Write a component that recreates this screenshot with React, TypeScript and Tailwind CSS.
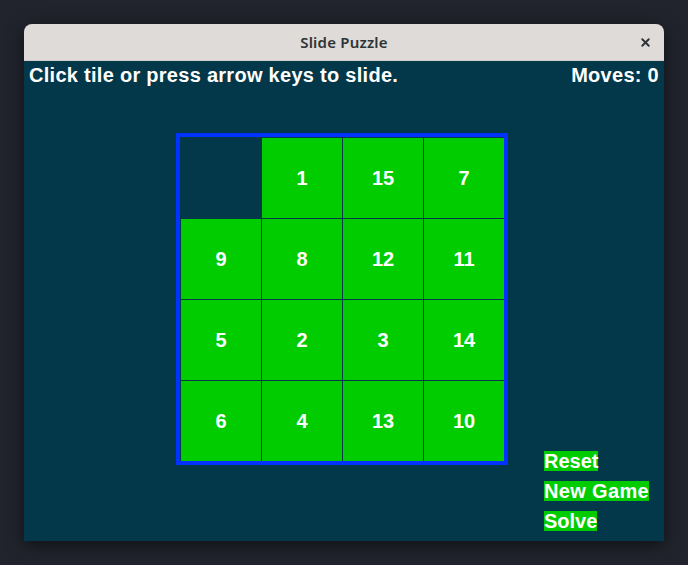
import { X } from 'lucide-react';

const board = [
  [0, 1, 15, 7],
  [9, 8, 12, 11],
  [5, 2, 3, 14],
  [6, 4, 13, 10],
];

const font = { fontFamily: '"Liberation Sans", Arial, sans-serif' };

export default function App() {
  return (
    <div className="w-[688px] h-[565px] bg-[#21242d] pt-[24px] pl-[24px]">
      <div className="w-[640px] rounded-t-[8px] overflow-hidden shadow-[0_4px_18px_rgba(0,0,0,0.55)]">
        {/* title bar */}
        <div className="h-[37px] bg-[#dedbd8] flex items-center justify-center relative border-b border-[#d0ccc8]">
          <span className="text-[15px] font-semibold text-[#2e3436] tracking-[0.2px]" style={{ fontFamily: '"Noto Sans", Inter, sans-serif' }}>
            Slide Puzzle
          </span>
          <X className="absolute right-[12px] top-[12px] w-[13px] h-[13px] text-[#2e3436]" strokeWidth={3.5} />
        </div>

        {/* game surface */}
        <div className="h-[480px] bg-[#03374a] text-white font-bold" style={font}>
          <div className="flex justify-between pl-[5px] pr-[5px] pt-[4px] text-[20px] leading-[20px] tracking-[0.28px]">
            <span>Click tile or press arrow keys to slide.</span>
            <span>Moves: 0</span>
          </div>

          <div className="flex items-start mt-[48px]">
            <div className="ml-[152px] border-[4px] border-[#0033ff] pl-px pt-px">
              <div className="grid grid-cols-[repeat(4,80px)] gap-px">
                {board.flat().map((n, i) =>
                  n === 0 ? (
                    <div key={i} className="w-[80px] h-[80px]" />
                  ) : (
                    <div key={i} className="w-[80px] h-[80px] bg-[#00cc00] flex items-center justify-center text-[20px] leading-[20px]">
                      {n}
                    </div>
                  )
                )}
              </div>
            </div>

            <div className="ml-[36px] mt-[318px] flex flex-col items-start gap-[10px] text-[20px] leading-[20px]">
              <span className="bg-[#00cc00] h-[20px]">Reset</span>
              <span className="bg-[#00cc00] h-[20px] tracking-[0.35px]">New Game</span>
              <span className="bg-[#00cc00] h-[20px]">Solve</span>
            </div>
          </div>
        </div>
      </div>
    </div>
  );
}
